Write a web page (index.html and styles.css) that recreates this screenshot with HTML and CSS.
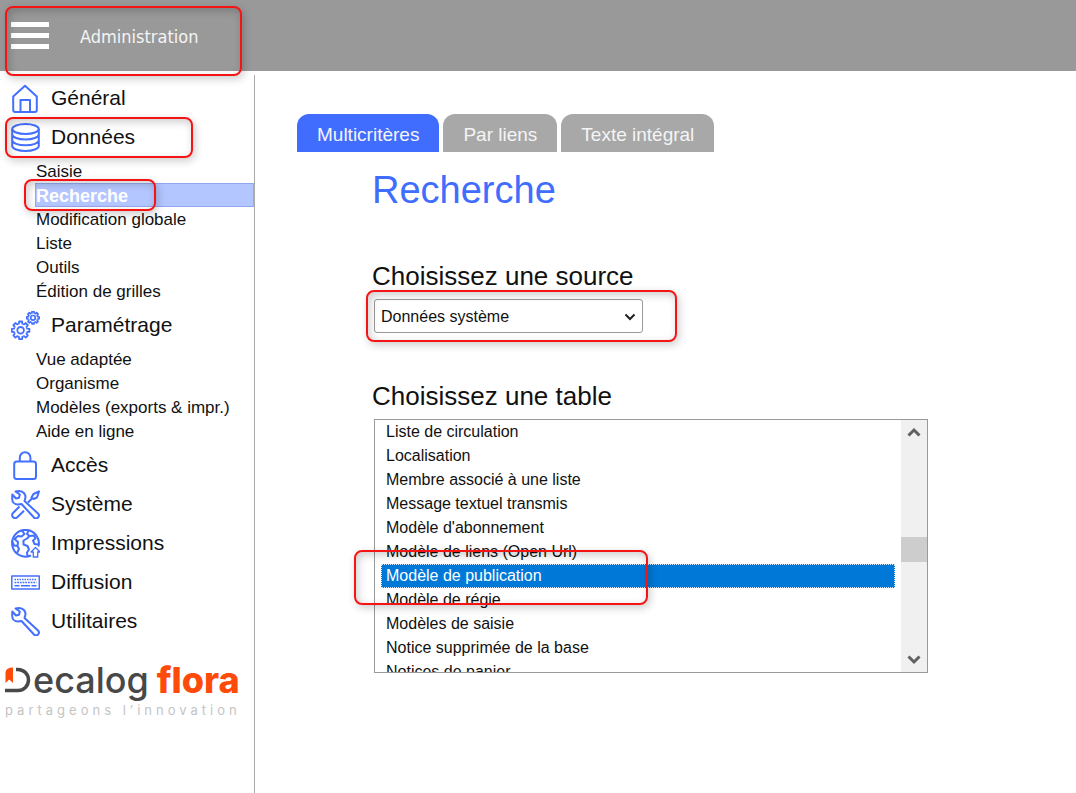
FILE: index.html
```html
<!DOCTYPE html>
<html lang="fr">
<head>
    <meta charset="UTF-8">
    <meta name="viewport" content="width=device-width, initial-scale=1.0">
    <title>Administration - Recherche</title>
    <link rel="stylesheet" href="styles.css">
</head>
<body>
    <header class="topbar">
        <button class="burger" type="button" aria-label="Menu">
            <span></span>
            <span></span>
            <span></span>
        </button>
        <span class="topbar-title">Administration</span>
        <span class="mark mark-header"></span>
    </header>

    <div class="layout">
        <aside class="sidebar">
            <nav>
                <a class="menu-item" href="#">
                    <svg class="icon" viewBox="0 0 29 29"><path d="M2.2 12.5 14 1.8 25.8 12.5V26a2 2 0 0 1-2 2H4.2a2 2 0 0 1-2-2zM9.5 28V16h9.5v12"/></svg>
                    Général
                </a>
                <a class="menu-item" href="#">
                    <svg class="icon" viewBox="0 0 29 29"><ellipse cx="14.5" cy="6" rx="13.3" ry="5"/><path d="M1.2 6v17c0 2.8 6 5 13.3 5s13.3-2.2 13.3-5V6M1.2 11.5c0 2.8 6 5 13.3 5s13.3-2.2 13.3-5M1.2 17.3c0 2.8 6 5 13.3 5s13.3-2.2 13.3-5"/></svg>
                    Données
                    <span class="mark mark-data"></span>
                </a>
                <ul class="submenu">
                    <li><a href="#">Saisie</a></li>
                    <li><a class="current" href="#">Recherche<span class="mark mark-search"></span></a></li>
                    <li><a href="#">Modification globale</a></li>
                    <li><a href="#">Liste</a></li>
                    <li><a href="#">Outils</a></li>
                    <li><a href="#">Édition de grilles</a></li>
                </ul>
                <a class="menu-item" href="#">
                    <svg class="icon" viewBox="0 0 29 29">
                        <defs>
                            <path id="tooth" d="M-2.6-6.28-1.7-6.6-1.5-8.8H1.5L1.7-6.6 2.6-6.28"/>
                            <g id="gear">
                                <use href="#tooth"/>
                                <use href="#tooth" transform="rotate(45)"/>
                                <use href="#tooth" transform="rotate(90)"/>
                                <use href="#tooth" transform="rotate(135)"/>
                                <use href="#tooth" transform="rotate(180)"/>
                                <use href="#tooth" transform="rotate(225)"/>
                                <use href="#tooth" transform="rotate(270)"/>
                                <use href="#tooth" transform="rotate(315)"/>
                                <circle r="3.3"/>
                            </g>
                        </defs>
                        <use href="#gear" transform="translate(9.6 19.3)" stroke-width="1.8"/>
                        <use href="#gear" transform="translate(22 6.8) scale(.7)" stroke-width="2.4"/>
                    </svg>
                    Paramétrage
                </a>
                <ul class="submenu">
                    <li><a href="#">Vue adaptée</a></li>
                    <li><a href="#">Organisme</a></li>
                    <li><a href="#">Modèles (exports &amp; impr.)</a></li>
                    <li><a href="#">Aide en ligne</a></li>
                </ul>
                <a class="menu-item" href="#">
                    <svg class="icon" viewBox="0 0 29 29"><rect x="3.2" y="10.5" width="21.8" height="17.5" rx="2.5"/><path d="M8.8 10.5V6.5a5.3 5.3 0 0 1 10.6 0v4"/></svg>
                    Accès
                </a>
                <a class="menu-item" href="#">
                    <svg class="icon" viewBox="0 0 29 29"><path d="M4.5 1.5 8 1c4 .5 6.5 3 6.5 6.5L13.5 11 27 23.500a2.8 2.8 0 0 1-4 4L10.5 14 7 14.500C3.500 14.500 1.200 12 1.200 9l.1-4.500L5 8.500l3-.8.8-3.200zM28 1.500 22.500 4 20.500 7.500 22.500 9 26 7.500zM21 8.500 17 12.500M8.500 16.500 2 23a2.900 2.900 0 0 0 4.300 4.300l6.700-6.500"/></svg>
                    Système
                </a>
                <a class="menu-item" href="#">
                    <svg class="icon" viewBox="0 0 29 29">
                        <path d="M20 26.5A13.4 13.4 0 1 1 27.5 17.5"/>
                        <path d="M11 1.7 13.5 5l-3 2.500L7 7 3.500 10 7 13l-.5 4L3 16.500 1.500 13M6.500 17 8 20l-2 4M17.500 1.700 16 5l2.500 2L16 9.500l-3.500 2v4l4 1.500 1.500 3.500-2 3 .5 4M18.500 7l4.500-.5 1.500 3-2.500 2 1.500 3.500 4 .5"/>
                        <path d="M24.5 18.5 29 23h-2.300v5h-4.400v-5H20z" fill="#fff" stroke-width="1.3"/>
                    </svg>
                    Impressions
                </a>
                <a class="menu-item" href="#">
                    <svg class="icon" viewBox="0 0 29 29"><rect x=".8" y="8" width="27.5" height="13" stroke-width="1.5"/><path d="M3.5 11.5h22" stroke-width="1.5" stroke-dasharray="1.5 1"/><path d="M3.5 14.5h22" stroke-width="1.5" stroke-dasharray="1.8 .9"/><path d="M3.5 17.8h5M10 17.8h9M20.500 17.8h5" stroke-width="1.5"/></svg>
                    Diffusion
                </a>
                <a class="menu-item" href="#">
                    <svg class="icon" viewBox="0 0 29 29"><path d="M4.5 1.5 8 1c4 .5 6.5 3 6.5 6.5L13.5 11 27 23.500a2.8 2.8 0 0 1-4 4L10.5 14 7 14.500C3.500 14.500 1.200 12 1.200 9l.1-4.500L5 8.500l3-.8.8-3.200z"/></svg>
                    Utilitaires
                </a>
            </nav>

            <div class="logo">
                <div class="logo-name">
                    <svg class="logo-mark" viewBox="0 0 26 26"><path d="M11 2.500H13a10.500 10.500 0 0 1 0 21H0" fill="none" stroke="#484848" stroke-width="3.5"/><path d="M.5 6Q.5.5 8 .5V16L4.250 12.500.5 16z" fill="#ff4b0a"/></svg>
                    <span class="logo-text">ecalog</span>
                    <span class="logo-flora">flora</span>
                </div>
                <div class="logo-tagline">partageons l’innovation</div>
            </div>
        </aside>

        <main class="content">
            <div class="tabs">
                <button class="tab active" type="button">Multicritères</button>
                <button class="tab" type="button">Par liens</button>
                <button class="tab" type="button">Texte intégral</button>
            </div>

            <form class="search">
                <h1>Recherche</h1>

                <label class="field-title" for="source">Choisissez une source</label>
                <div class="source-box">
                    <select id="source" class="source">
                        <option>Données système</option>
                    </select>
                    <svg class="chevron" viewBox="0 0 12 8"><path d="M1.5 1.5 6 6l4.500-4.500"/></svg>
                    <span class="mark mark-source"></span>
                </div>

                <label class="field-title" for="table">Choisissez une table</label>
                <div class="table-box">
                    <select id="table" class="table-list" size="10">
                        <option>Liste de circulation</option>
                        <option>Localisation</option>
                        <option>Membre associé à une liste</option>
                        <option>Message textuel transmis</option>
                        <option>Modèle d'abonnement</option>
                        <option>Modèle de liens (Open Url)</option>
                        <option selected>Modèle de publication</option>
                        <option>Modèle de régie</option>
                        <option>Modèles de saisie</option>
                        <option>Notice supprimée de la base</option>
                        <option>Notices de panier</option>
                    </select>
                    <div class="scrollbar">
                        <svg viewBox="0 0 14 10"><path d="M1.5 8.5 7 3l5.500 5.500"/></svg>
                        <div class="thumb"></div>
                        <svg viewBox="0 0 14 10"><path d="M1.5 1.5 7 7l5.500-5.500"/></svg>
                    </div>
                    <span class="mark mark-table"></span>
                </div>
            </form>
        </main>
    </div>
</body>
</html>
```
FILE: styles.css
```css
* {
    box-sizing: border-box;
}
body {
    margin: 0;
    min-height: 100vh;
    display: flex;
    flex-direction: column;
    font-family: "Liberation Sans", Arial, sans-serif;
    color: #111;
    background-color: #fff;
}
a {
    color: inherit;
    text-decoration: none;
}

/* Top bar */
.topbar {
    position: relative;
    display: flex;
    align-items: center;
    gap: 31px;
    height: 71px;
    padding: 0 11px;
    background-color: #999;
}
.burger {
    display: flex;
    flex-direction: column;
    gap: 6px;
    width: 38px;
    padding: 0;
    border: none;
    background: none;
    cursor: pointer;
}
.burger span {
    height: 5px;
    background-color: #fff;
}
.topbar-title {
    padding-top: 2px;
    font-family: "DejaVu Sans Condensed", "DejaVu Sans", sans-serif;
    font-size: 18px;
    line-height: 24px;
    color: #f4f4f4;
}

/* Side menu */
.layout {
    flex: 1;
    display: flex;
}
.sidebar {
    flex: none;
    width: 255px;
    margin-top: 4px;
    padding-top: 3px;
    border-right: 1px solid #aaa;
}
.menu-item {
    position: relative;
    display: flex;
    align-items: center;
    gap: 11px;
    height: 39px;
    padding-left: 11px;
    font-size: 21px;
}
.icon {
    width: 29px;
    height: 29px;
    margin-top: 2px;
    fill: none;
    stroke: #4470ff;
    stroke-width: 2;
    stroke-linejoin: round;
}
.submenu {
    margin: 0;
    padding: 3px 0 2px 35px;
    list-style: none;
    font-size: 17px;
    line-height: 20px;
}
.submenu a {
    position: relative;
    display: block;
    padding-top: 2px;
    border: 1px solid transparent;
}
.submenu .current {
    border-color: #93a9ef;
    background-color: #b4c6ff;
    color: #fff;
    font-size: 18px;
    font-weight: bold;
}

/* Logo */
.logo {
    padding: 20px 4px 0 5px;
}
.logo-name {
    display: flex;
    align-items: center;
    font-family: Inter, sans-serif;
    font-size: 36px;
    line-height: 40px;
}
.logo-mark {
    width: 26px;
    height: 26px;
    margin-right: 2px;
}
.logo-text {
    color: #484848;
    font-weight: 500;
}
.logo-flora {
    margin-left: 8px;
    color: #ff4b0a;
    font-weight: 800;
}
.logo-tagline {
    padding-top: 2px;
    color: #c4c4c4;
    font-family: Inter, sans-serif;
    font-size: 13px;
    line-height: 16px;
    letter-spacing: 4px;
    white-space: nowrap;
}

/* Search page */
.content {
    flex: 1;
    padding: 43px 42px;
}
.tabs {
    display: flex;
    gap: 4px;
}
.tab {
    height: 38px;
    padding: 4px 20px 0;
    border: none;
    border-radius: 12px 12px 0 0;
    background-color: #a8a8a8;
    color: #f4f4f4;
    font-family: inherit;
    font-size: 19px;
    cursor: pointer;
}
.tab.active {
    background-color: #416dff;
}
.search {
    padding: 16px 0 0 75px;
}
h1 {
    margin: 0 0 49px;
    color: #416dff;
    font-size: 38px;
    font-weight: normal;
    line-height: 44px;
}
.field-title {
    display: block;
    margin-bottom: 8px;
    font-size: 26px;
    line-height: 30px;
}
.source-box {
    position: relative;
    width: 269px;
    margin: 0 0 48px 2px;
}
.source {
    appearance: none;
    display: block;
    width: 100%;
    height: 34px;
    padding: 0 30px 0 6px;
    border: 1px solid #999;
    border-radius: 3px;
    background-color: #fff;
    color: #111;
    font-family: inherit;
    font-size: 16px;
}
.chevron {
    position: absolute;
    right: 7px;
    top: 14px;
    width: 12px;
    height: 8px;
    fill: none;
    stroke: #222;
    stroke-width: 2;
    pointer-events: none;
}
.table-box {
    position: relative;
    display: flex;
    max-width: 554px;
    height: 254px;
    margin-left: 2px;
    border: 1px solid #999;
}
.table-list {
    flex: 1;
    min-width: 0;
    height: 252px;
    padding: 0 6px;
    border: none;
    outline: none;
    background-color: #fff;
    color: #111;
    font-family: inherit;
    font-size: 16px;
    scrollbar-width: none;
}
.table-list option {
    height: 24px;
    min-height: 24px;
    padding: 3px 5px 0;
}
.table-list option:checked {
    background: #0078d7 linear-gradient(#0078d7, #0078d7);
    outline: 1px dotted #cfe6fa;
    outline-offset: -1px;
    -webkit-text-fill-color: #fff;
}
.scrollbar {
    display: flex;
    flex-direction: column;
    align-items: center;
    justify-content: space-between;
    width: 26px;
    padding: 7px 0;
    background-color: #f0f0f0;
}
.scrollbar svg {
    width: 14px;
    height: 10px;
    fill: none;
    stroke: #606060;
    stroke-width: 3;
}
.thumb {
    width: 100%;
    height: 25px;
    /* thumb sits a little under the middle of the track */
    margin-top: 6px;
    background-color: #cdcdcd;
}

/* Red frames around the steps to follow */
.mark {
    position: absolute;
    z-index: 1;
    border: 2px solid #f41414;
    border-radius: 8px;
    box-shadow: 2px 3px 8px rgba(0, 0, 0, 0.2), inset 2px 3px 8px rgba(0, 0, 0, 0.2);
    pointer-events: none;
}
.mark-header {
    left: 5px;
    top: 6px;
    width: 237px;
    height: 70px;
}
.mark-data {
    left: 5px;
    top: 0;
    width: 188px;
    height: 41px;
}
.mark-search {
    left: -12px;
    top: -5px;
    width: 132px;
    height: 32px;
}
.mark-source {
    left: -8px;
    top: -9px;
    width: 311px;
    height: 52px;
}
.mark-table {
    left: -21px;
    top: 130px;
    width: 294px;
    height: 55px;
}
```
